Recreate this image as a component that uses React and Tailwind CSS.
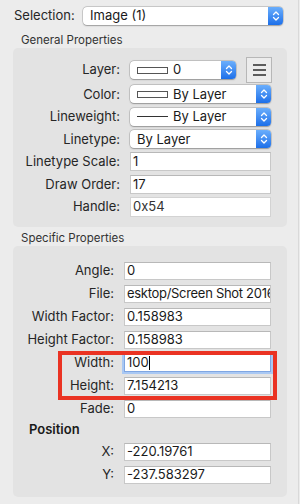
const font = { fontFamily: 'Inter, "Liberation Sans", sans-serif' }

function Chevrons() {
  return (
    <svg width="8" height="12" viewBox="0 0 8 12" fill="none" stroke="white" strokeWidth="1.3" strokeLinecap="round" strokeLinejoin="round">
      <path d="M1.5 4.5 L4 2 L6.5 4.5" />
      <path d="M1.5 7.5 L4 10 L6.5 7.5" />
    </svg>
  )
}

function Select({ children, className = '' }) {
  return (
    <div className={`flex h-[18px] items-stretch rounded-[4px] bg-white shadow-[0_0_0_0.5px_rgba(0,0,0,0.22),0_0.5px_1.5px_rgba(0,0,0,0.25)] ${className}`}>
      <div className="flex flex-1 items-center gap-[5px] overflow-hidden whitespace-nowrap pl-[7px] text-[13px] text-[#1a1a1a]">{children}</div>
      <div className="flex w-[15px] items-center justify-center rounded-r-[4px] bg-gradient-to-b from-[#6aaefc] to-[#1b6fe9]">
        <Chevrons />
      </div>
    </div>
  )
}

function Swatch() {
  return <span className="inline-block h-[7px] w-[31px] flex-none border border-[#555] bg-white" />
}

function Input({ value, className = '' }) {
  return (
    <div className={`flex h-[18px] items-center overflow-hidden whitespace-nowrap border border-[#c8c8c8] border-t-[#b8b8b8] bg-white pl-[2px] text-[13px] text-[#1a1a1a] ${className}`}>
      {value}
    </div>
  )
}

export default function App() {
  return (
    <div style={font} className="relative h-[504px] w-[300px] overflow-hidden bg-[#ececec]">
      <div className="flex h-full w-[299px] flex-col border-r border-[#d9d9d9] pt-[7px]">
        {/* Selection */}
        <div className="flex h-[18px] items-center pl-[14px]">
          <div className="w-[69px] text-[13px] text-[#262626]">Selection:</div>
          <Select className="w-[200px]">Image (1)</Select>
        </div>

        {/* General Properties */}
        <div className="mt-[8px] h-[15px] pl-[21px] text-[11.5px] leading-[15px] text-[#333]">General Properties</div>
        <div className="ml-[13px] w-[274px] rounded-[5px] bg-[#e3e3e3] pb-[9px] pt-[9px]">
          <div className="flex h-[26px] items-center">
            <div className="w-[107px] text-right text-[13px] text-[#262626]">Layer:</div>
            <Select className="ml-[10px] w-[106px]">
              <Swatch />
              <span>0</span>
            </Select>
            <div className="ml-[10px] flex h-[26px] w-[26px] flex-col items-center justify-center gap-[3px] border border-[#b7b7b7] bg-[#ececec]">
              <span className="h-[2px] w-[13px] bg-[#5c5c5c]" />
              <span className="h-[2px] w-[13px] bg-[#5c5c5c]" />
              <span className="h-[2px] w-[13px] bg-[#5c5c5c]" />
            </div>
          </div>
          {[
            ['Color:', 'swatch'],
            ['Lineweight:', 'line'],
            ['Linetype:', null],
          ].map(([label, kind]) => (
            <div key={label} className="flex h-[22.5px] items-center">
              <div className="w-[107px] text-right text-[13px] text-[#262626]">{label}</div>
              <Select className="ml-[10px] w-[141px]">
                {kind === 'swatch' && <Swatch />}
                {kind === 'line' && <span className="inline-block h-px w-[31px] flex-none bg-[#333]" />}
                <span>By Layer</span>
              </Select>
            </div>
          ))}
          {[
            ['Linetype Scale:', '1'],
            ['Draw Order:', '17'],
          ].map(([label, value]) => (
            <div key={label} className="flex h-[22.5px] items-center">
              <div className="w-[107px] text-right text-[13px] text-[#262626]">{label}</div>
              <Input value={value} className="ml-[10px] h-[19px] w-[141px]" />
            </div>
          ))}
          <div className="flex h-[22.5px] items-center">
            <div className="w-[107px] text-right text-[13px] text-[#262626]">Handle:</div>
            <Input value="0x54" className="ml-[10px] h-[20px] w-[141px] border-[#d3d3d3] border-t-[#d3d3d3] bg-[#e8e8e8] text-[#333]" />
          </div>
        </div>

        {/* Specific Properties */}
        <div className="mt-[4px] h-[15px] pl-[21px] text-[11.5px] leading-[15px] text-[#333]">Specific Properties</div>
        <div className="ml-[13px] w-[274px] rounded-[5px] bg-[#e3e3e3] pb-[11px] pt-[13px]">
          <div className="flex h-[23px] items-center">
            <div className="w-[101px] text-right text-[13px] text-[#262626]">Angle:</div>
            <Input value="0" className="ml-[10px] w-[147px]" />
          </div>
          <div className="flex h-[23px] items-center">
            <div className="w-[101px] text-right text-[13px] text-[#262626]">File:</div>
            <Input value="esktop/Screen Shot 2016" className="ml-[10px] w-[147px] tracking-[-0.3px]" />
          </div>
          {[
            ['Width Factor:', '0.158983'],
            ['Height Factor:', '0.158983'],
          ].map(([label, value]) => (
            <div key={label} className="flex h-[23px] items-center">
              <div className="w-[101px] text-right text-[13px] text-[#262626]">{label}</div>
              <Input value={value} className="ml-[10px] w-[147px]" />
            </div>
          ))}
          <div className="flex h-[23px] items-center">
            <div className="w-[101px] text-right text-[13px] text-[#262626]">Width:</div>
            <div className="ml-[10px] flex h-[18px] w-[147px] items-center border border-[#7fa6e2] bg-white pl-[2px] text-[13px] text-[#1a1a1a] shadow-[0_0_0_2px_#a9c8f3]">
              100<span className="h-[14px] w-px bg-black" />
            </div>
          </div>
          {[
            ['Height:', '7.154213'],
            ['Fade:', '0'],
          ].map(([label, value]) => (
            <div key={label} className="flex h-[23px] items-center">
              <div className="w-[101px] text-right text-[13px] text-[#262626]">{label}</div>
              <Input value={value} className="ml-[10px] w-[147px]" />
            </div>
          ))}
          <div className="flex h-[20px] items-center pl-[16px] text-[13px] font-semibold text-[#1a1a1a]">Position</div>
          {[
            ['X:', '-220.19761'],
            ['Y:', '-237.583297'],
          ].map(([label, value]) => (
            <div key={label} className="flex h-[23px] items-center">
              <div className="w-[101px] text-right text-[13px] text-[#262626]">{label}</div>
              <Input value={value} className="ml-[10px] w-[147px]" />
            </div>
          ))}
        </div>
      </div>

      {/* Red highlight */}
      <div className="pointer-events-none absolute left-[58px] top-[351px] h-[49px] w-[219px] border-[4px] border-[#ea3323]" />
    </div>
  )
}
